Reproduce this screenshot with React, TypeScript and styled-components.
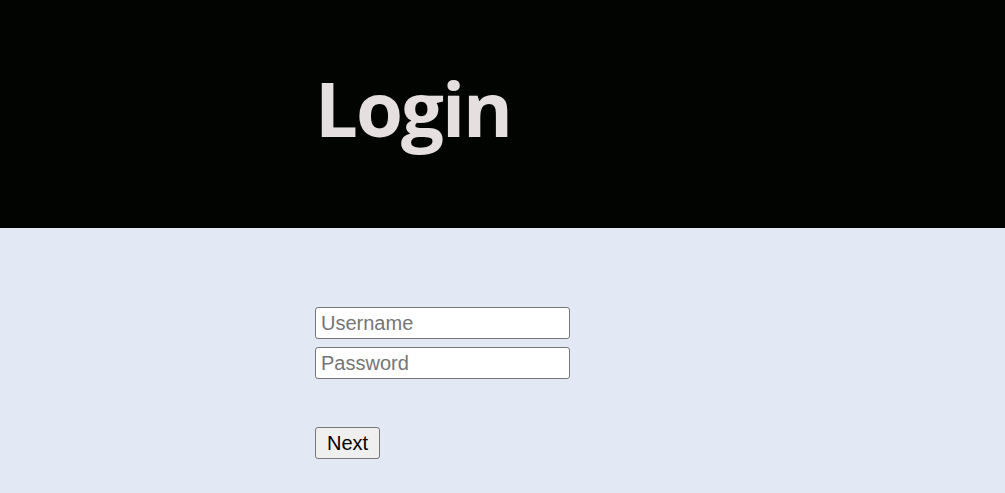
import React from "react";
import styled, { createGlobalStyle } from "styled-components";

const Global = createGlobalStyle`
  html, body {
    margin: 0;
    padding: 0;
    background: #e2e8f4;
  }
  body {
    font-family: "Liberation Sans", Arial, sans-serif;
  }
`;

const Page = styled.div`
  min-height: 493px;
  background: #e2e8f4;
`;

const Header = styled.header`
  height: 228px;
  background: #020402;
  padding-left: 315px;
  box-sizing: border-box;
  display: flex;
  align-items: flex-start;
`;

const Title = styled.h1`
  margin: 0;
  padding-top: 62px;
  font-family: "Open Sans", "Noto Sans", sans-serif;
  font-weight: 700;
  font-size: 76px;
  line-height: 1.2;
  color: #e6dfe0;
  letter-spacing: -2px;
`;

const Form = styled.form`
  display: flex;
  flex-direction: column;
  align-items: flex-start;
  padding: 79px 0 0 315px;
`;

const Field = styled.input`
  box-sizing: border-box;
  width: 255px;
  height: 32px;
  margin: 0 0 8px 0;
  padding: 1px 5px;
  border: 1px solid #767676;
  border-radius: 3px;
  background: #ffffff;
  font-family: "Liberation Sans", Arial, sans-serif;
  font-size: 20px;
  color: #000;
  outline: none;

  &::placeholder {
    color: #757575;
  }
`;

const Button = styled.button`
  box-sizing: border-box;
  height: 32px;
  margin-top: 40px;
  padding: 0 11px;
  border: 1px solid #767676;
  border-radius: 3px;
  background: #efefef;
  font-family: "Liberation Sans", Arial, sans-serif;
  font-size: 20px;
  color: #000;
  cursor: pointer;
`;

export default function App() {
  return (
    <Page>
      <Global />
      <Header>
        <Title>Login</Title>
      </Header>
      <Form onSubmit={(e) => e.preventDefault()}>
        <Field type="text" placeholder="Username" />
        <Field type="password" placeholder="Password" />
        <Button type="submit">Next</Button>
      </Form>
    </Page>
  );
}
